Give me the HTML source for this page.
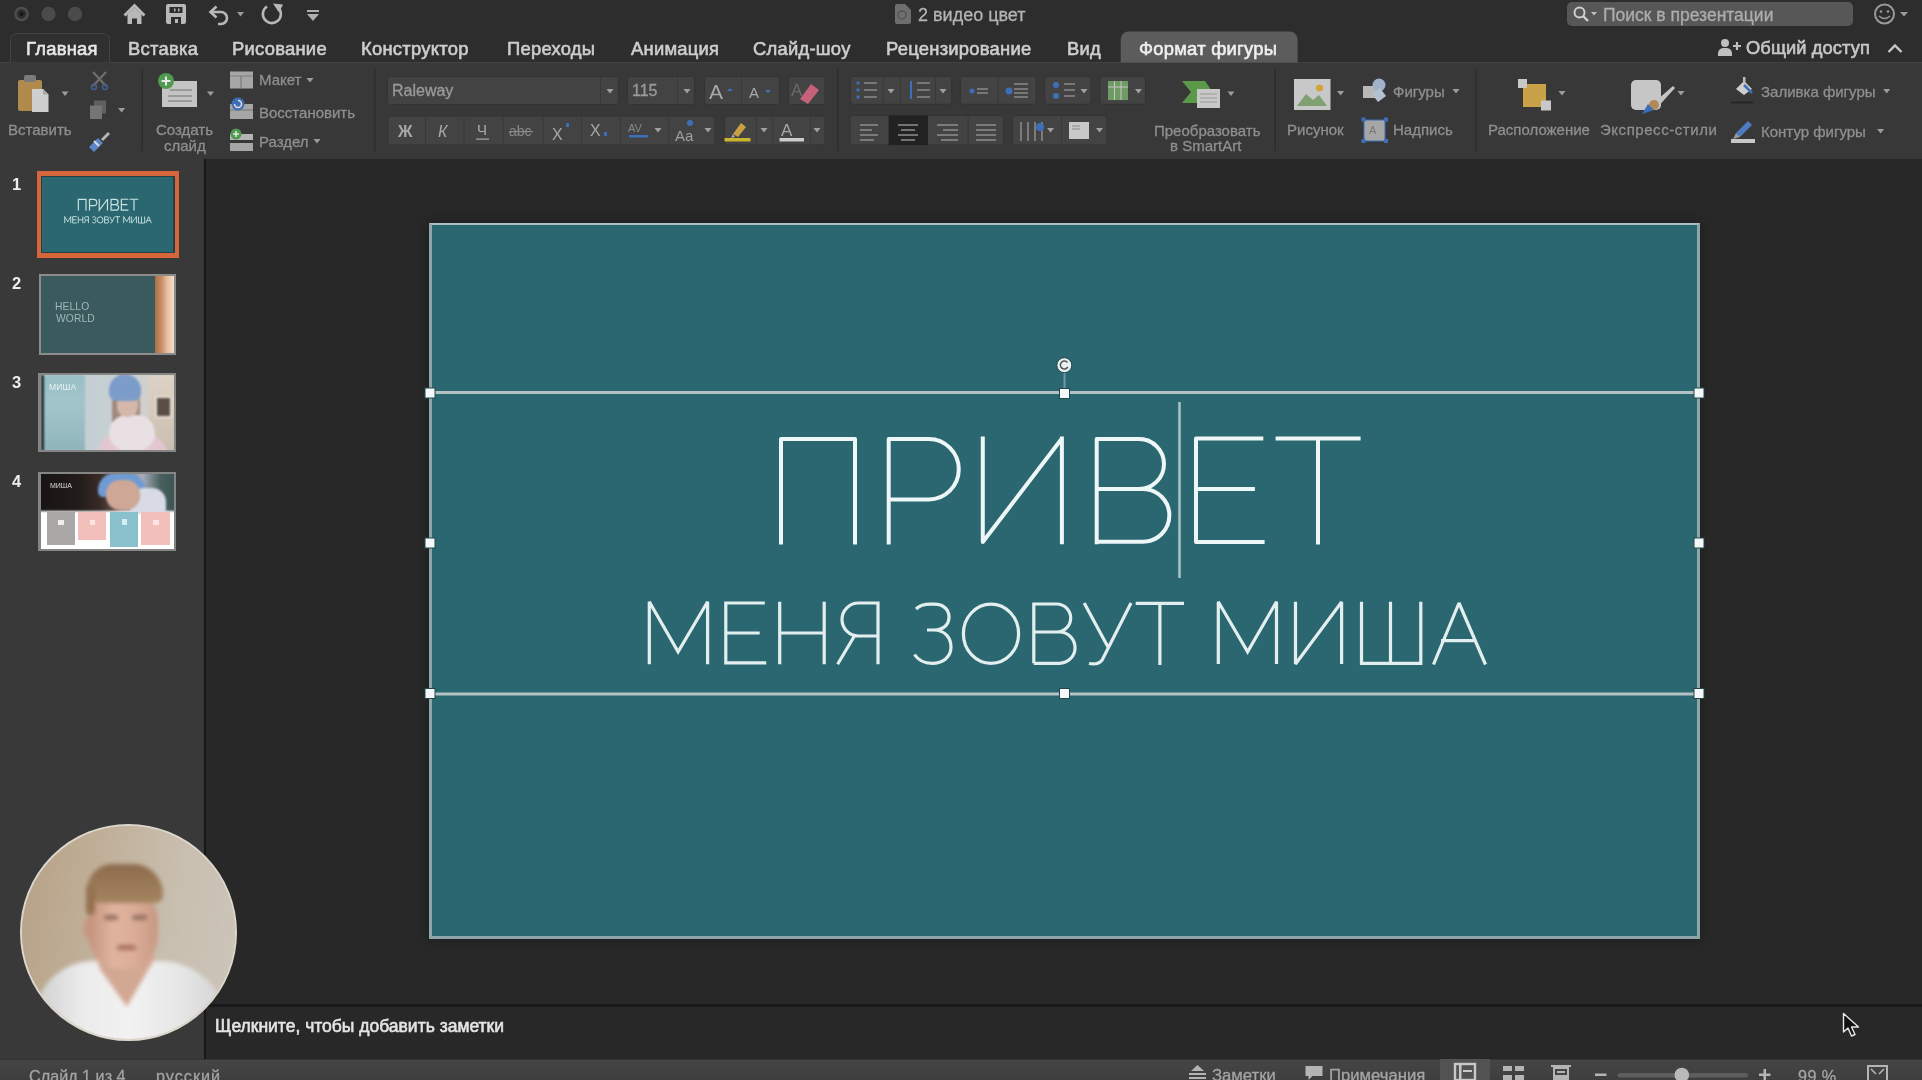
<!DOCTYPE html>
<html><head><meta charset="utf-8">
<style>
*{margin:0;padding:0;box-sizing:border-box}
html,body{width:1922px;height:1080px;overflow:hidden;background:#282828;font-family:"Liberation Sans",sans-serif}
.a{position:absolute}
.t{position:absolute;white-space:nowrap;line-height:1;will-change:transform}
svg{will-change:transform}
#titlebar{left:0;top:0;width:1922px;height:62px;background:#2d2d2d}
#ribbon{left:0;top:62px;width:1922px;height:97px;background:#383838;border-top:1px solid #424242}
#panel{left:0;top:159px;width:204px;height:901px;background:#393939}
#pdiv{left:204px;top:159px;width:2px;height:901px;background:#171717}
#main{left:206px;top:159px;width:1716px;height:845px;background:#282828}
#ndiv{left:206px;top:1004px;width:1716px;height:3px;background:#191919}
#notes{left:206px;top:1007px;width:1716px;height:52px;background:#282828}
#status{left:0;top:1059px;width:1922px;height:21px;background:linear-gradient(#454545,#3e3e3e);border-top:1px solid #333}
.tab{font-size:18.4px;font-weight:normal;color:#cdcdcd;top:39.8px;-webkit-text-stroke:0.6px currentColor;letter-spacing:0.25px}
.lbl{font-size:15px;color:#8f8f8f;-webkit-text-stroke:0.3px #8f8f8f}
.sep{width:2px;background:#2a2a2a;border-right:1px solid #3a3a3a}
.box{background:#3d3d3d;border-radius:3px}
#T1 path,#T2 path,#T2 ellipse{vector-effect:non-scaling-stroke}
</style></head><body>
<div class="a" id="titlebar"></div>
<div class="a" id="ribbon"></div>
<div class="a" id="panel"></div>
<div class="a" id="pdiv"></div>
<div class="a" id="main"></div>
<div class="a" id="ndiv"></div>
<div class="a" id="notes"></div>
<div class="a" id="status"></div>

<!-- TITLE BAR -->
<svg class="a" style="left:0;top:0" width="1922" height="63" viewBox="0 0 1922 63">
 <circle cx="21.5" cy="14" r="6" fill="none" stroke="#4e4e4e" stroke-width="2.5"/>
 <circle cx="21.5" cy="14" r="2" fill="#161616"/>
 <circle cx="48.5" cy="14" r="7.2" fill="#4b4b4b"/>
 <circle cx="75" cy="14" r="7.2" fill="#4b4b4b"/>
 <g fill="#b8b8b8" stroke="none">
  <path d="M123.5,14.5L134.5,3.5L145.5,14.5L143.5,16.5L134.5,7.5L125.5,16.5Z"/>
  <path d="M127.5,14L134.5,7.5L141.5,14V24H137V18.5H132V24H127.5Z"/>
  <path d="M166,6a2,2 0 0 1 2,-2H184a2,2 0 0 1 2,2V22a2,2 0 0 1 -2,2H168a2,2 0 0 1 -2,-2ZM169.5,7V13H182.5V7ZM171,17V24H181V17Z"/>
 </g>
 <rect x="174" y="8.5" width="1.5" height="3" fill="#b8b8b8"/><rect x="178" y="8.5" width="1.5" height="3" fill="#b8b8b8"/>
 <rect x="175" y="19" width="3" height="4" fill="#b8b8b8"/>
 <g fill="none" stroke="#b8b8b8" stroke-width="2.6">
  <path d="M211,12H221A6,6 0 0 1 221,24H218"/>
  <path d="M216.5,6.5L210.5,12L216.5,17.5"/>
  <path d="M278.5,8A9,9 0 1 1 267,6.5"/>
 </g>
 <path d="M273,3.5L283,4.5L279,12.5Z" fill="#b8b8b8"/>
 <path d="M237,12H244L240.5,16.5Z" fill="#9a9a9a"/>
 <rect x="307" y="10" width="12" height="2" fill="#b0b0b0"/>
 <path d="M307,14H319L313,21Z" fill="#b0b0b0"/>
 <path d="M895,6a2,2 0 0 1 2,-2H905L911,10V22a2,2 0 0 1 -2,2H897a2,2 0 0 1 -2,-2Z" fill="#6e6e6e"/>
 <circle cx="902" cy="15" r="4" fill="none" stroke="#555" stroke-width="1.5"/>
 <rect x="1567" y="2" width="286" height="24" rx="5" fill="#575757"/>
 <circle cx="1579.5" cy="12.5" r="5" fill="none" stroke="#d0d0d0" stroke-width="2"/>
 <path d="M1583,16L1588,21" stroke="#d0d0d0" stroke-width="2.4"/>
 <path d="M1591,12H1597L1594,15.5Z" fill="#c0c0c0"/>
 <circle cx="1884.5" cy="14" r="9.5" fill="none" stroke="#9a9a9a" stroke-width="2"/>
 <circle cx="1881" cy="11.5" r="1.3" fill="#9a9a9a"/><circle cx="1888" cy="11.5" r="1.3" fill="#9a9a9a"/>
 <path d="M1879,16Q1884.5,21 1890,16" fill="none" stroke="#9a9a9a" stroke-width="1.6"/>
 <path d="M1900,12H1908L1904,16.5Z" fill="#9a9a9a"/>
 <!-- tabs -->
 <path d="M10.5,62.5V39.5a6,6 0 0 1 6,-6H103.5a6,6 0 0 1 6,6V62.5" fill="#303030" stroke="#424242" stroke-width="1"/>
 <path d="M1120.7,62.5V39.5a8,8 0 0 1 8,-8H1289.6a8,8 0 0 1 8,8V62.5Z" fill="#5c5c5c"/>
 <!-- share -->
 <circle cx="1725" cy="43" r="4" fill="#c0c0c0"/>
 <path d="M1718,56V53a6,6 0 0 1 6,-5h2a6,6 0 0 1 6,5V56Z" fill="#c0c0c0"/>
 <path d="M1733,46H1741M1737,42V50" stroke="#c0c0c0" stroke-width="2.2"/>
 <path d="M1888.5,52L1895,45.5L1901.5,52" fill="none" stroke="#c8c8c8" stroke-width="2.4"/>
</svg>
<div class="t" style="left:918px;top:5.9px;font-size:18px;color:#b4b4b4;-webkit-text-stroke:0.3px currentColor">2 видео цвет</div>
<div class="t" style="left:1603px;top:7px;font-size:17.5px;color:#adadad;-webkit-text-stroke:0.3px currentColor">Поиск в презентации</div>
<div class="t" style="left:1746px;top:39.2px;font-size:18.3px;color:#c6c6c6;-webkit-text-stroke:0.6px currentColor;letter-spacing:0.1px">Общий доступ</div>
<div class="t tab" style="left:25.5px;color:#e8e8e8">Главная</div>
<div class="t tab" style="left:127.8px">Вставка</div>
<div class="t tab" style="left:231.8px">Рисование</div>
<div class="t tab" style="left:360.8px">Конструктор</div>
<div class="t tab" style="left:507px">Переходы</div>
<div class="t tab" style="left:631px">Анимация</div>
<div class="t tab" style="left:753px">Слайд-шоу</div>
<div class="t tab" style="left:885.8px">Рецензирование</div>
<div class="t tab" style="left:1066.8px">Вид</div>
<div class="t tab" style="left:1139px;color:#f0f0f0">Формат фигуры</div>

<!-- RIBBON -->
<svg class="a" style="left:0;top:61px" width="1922" height="98" viewBox="0 61 1922 98">
 <defs>
  <path id="car" d="M-3.5,-2H3.5L0,2.5Z"/>
 </defs>
 <!-- separators -->
 <g fill="#2c2c2c">
  <rect x="141.5" y="69" width="1.5" height="82"/>
  <rect x="374" y="69" width="1.5" height="82"/>
  <rect x="837" y="69" width="1.5" height="82"/>
  <rect x="1274.5" y="69" width="1.5" height="82"/>
  <rect x="1475.5" y="69" width="1.5" height="82"/>
 </g>
 <g fill="#9c9c9c">
  <use href="#car" x="65" y="93.6"/>
  <use href="#car" x="121.6" y="110"/>
  <use href="#car" x="210.5" y="93.6"/>
  <use href="#car" x="310" y="80"/>
  <use href="#car" x="317" y="141"/>
  <use href="#car" x="1231" y="93.5"/>
  <use href="#car" x="1340.6" y="93"/>
  <use href="#car" x="1456" y="91"/>
  <use href="#car" x="1562" y="93"/>
  <use href="#car" x="1681" y="93"/>
  <use href="#car" x="1886.7" y="91"/>
  <use href="#car" x="1880.6" y="131"/>
 </g>
 <!-- Paste -->
 <rect x="18" y="80" width="24" height="31" rx="2" fill="#b0894c"/>
 <rect x="24" y="75" width="12" height="7" rx="2" fill="#7a7a7a"/>
 <path d="M32,89H43L48.5,94.5V112H32Z" fill="#cfcfcf"/>
 <path d="M43,89V94.5H48.5" fill="#a8a8a8"/>
 <!-- Cut -->
 <path d="M93,72L106,86M106,72L93,86" stroke="#6e6e6e" stroke-width="2.2"/>
 <circle cx="94" cy="87" r="2.5" fill="none" stroke="#3f5f8f" stroke-width="1.6"/>
 <circle cx="105" cy="87" r="2.5" fill="none" stroke="#3f5f8f" stroke-width="1.6"/>
 <!-- Copy -->
 <rect x="94" y="100.5" width="12" height="13" fill="#606060"/>
 <rect x="90" y="105.5" width="12" height="13.5" fill="#757575"/>
 <!-- Brush -->
 <path d="M101,139L108,132L110,134L103,141Z" fill="#b8b8b8"/>
 <path d="M89,147L98,138L103,143L94,152Z" fill="#5b86c6"/>
 <path d="M94,141L99,146" stroke="#dcdcdc" stroke-width="2"/>
 <!-- New slide -->
 <rect x="162" y="81" width="35" height="26" fill="#c4c4c4"/>
 <path d="M170,90H192M168,96H192M168,101H192" stroke="#8d8d8d" stroke-width="1.6"/>
 <circle cx="166" cy="81" r="8" fill="#4f9a4f"/>
 <path d="M166,76.5V85.5M161.5,81H170.5" stroke="#e8e8e8" stroke-width="2"/>
 <!-- Layout -->
 <rect x="230" y="71.5" width="23" height="17" fill="#a6a6a6"/>
 <path d="M230,76H253M241,76V88.5" stroke="#7c7c7c" stroke-width="1.2"/>
 <!-- Reset -->
 <rect x="230" y="104" width="23" height="15" fill="#a6a6a6"/>
 <path d="M230,110H253" stroke="#7c7c7c" stroke-width="1.2"/>
 <circle cx="238" cy="104" r="6.5" fill="#3d6fb8"/>
 <path d="M234.5,104A3.5,3.5 0 1 0 238,100.5" fill="none" stroke="#e0e0e0" stroke-width="1.5"/>
 <!-- Section -->
 <rect x="230" y="134" width="23" height="6" fill="#b5b5b5"/>
 <rect x="230" y="143" width="23" height="8" fill="#a6a6a6"/>
 <circle cx="236" cy="134" r="5.5" fill="#4f9a4f"/>
 <path d="M236,131V137M233,134H239" stroke="#e8e8e8" stroke-width="1.5"/>
 <!-- Font boxes -->
 <g fill="#434343" stroke="#333" stroke-width="1">
  <rect x="387.5" y="76.5" width="231" height="28" rx="3"/>
  <rect x="627.5" y="76.5" width="67" height="28" rx="3"/>
  <rect x="704.5" y="76.5" width="75" height="28" rx="3"/>
  <rect x="788.5" y="76.5" width="36.5" height="28" rx="3"/>
  <rect x="388" y="116" width="327" height="29" rx="3"/>
  <rect x="724.5" y="116" width="100.5" height="29" rx="3"/>
  <rect x="850.3" y="76.3" width="101.3" height="28" rx="3"/>
  <rect x="960.4" y="76.3" width="75.9" height="28" rx="3"/>
  <rect x="1044.7" y="76.3" width="46.3" height="28" rx="3"/>
  <rect x="1100" y="76.3" width="45.5" height="28" rx="3"/>
  <rect x="850" y="115.5" width="153.5" height="29.5" rx="3"/>
  <rect x="1012.4" y="115.5" width="94.6" height="29.5" rx="3"/>
 </g>
 <rect x="888.6" y="115.5" width="39.4" height="29.5" fill="#222"/>
 <g fill="#383838">
  <rect x="600" y="77" width="1" height="27"/>
  <rect x="677" y="77" width="1" height="27"/>
  <rect x="741" y="77" width="1" height="27"/>
  <rect x="425" y="116.5" width="1" height="28"/>
  <rect x="463.5" y="116.5" width="1" height="28"/>
  <rect x="502.5" y="116.5" width="1" height="28"/>
  <rect x="542.5" y="116.5" width="1" height="28"/>
  <rect x="581" y="116.5" width="1" height="28"/>
  <rect x="620" y="116.5" width="1" height="28"/>
  <rect x="668.5" y="116.5" width="1" height="28"/>
  <rect x="756" y="116.5" width="1" height="28"/>
  <rect x="772.5" y="116.5" width="1" height="28"/>
  <rect x="810" y="116.5" width="1" height="28"/>
  <rect x="882.7" y="77" width="1" height="27"/>
  <rect x="900" y="77" width="1" height="27"/>
  <rect x="935" y="77" width="1" height="27"/>
  <rect x="997.5" y="77" width="1" height="27"/>
  <rect x="967.6" y="116" width="1" height="28.5"/>
  <rect x="1061" y="116" width="1" height="28.5"/>
 </g>
 <g fill="#a0a0a0">
  <use href="#car" x="610" y="91"/>
  <use href="#car" x="687" y="91"/>
  <use href="#car" x="658" y="130"/>
  <use href="#car" x="708" y="130"/>
  <use href="#car" x="764" y="130"/>
  <use href="#car" x="817" y="130"/>
  <use href="#car" x="891" y="91"/>
  <use href="#car" x="943" y="91"/>
  <use href="#car" x="1084" y="91"/>
  <use href="#car" x="1138.5" y="91"/>
  <use href="#car" x="1050.5" y="130"/>
  <use href="#car" x="1099.5" y="130"/>
 </g>
 <!-- grow/shrink -->
 <text x="709" y="98.5" font-family="Liberation Sans" font-size="21" fill="#a8a8a8">A</text>
 <path d="M727,91L730,88L733,91Z" fill="#3d6fb8"/>
 <text x="749" y="98" font-family="Liberation Sans" font-size="15" fill="#a8a8a8">A</text>
 <path d="M765,90L768,93L771,90Z" fill="#3d6fb8"/>
 <!-- clear format -->
 <text x="791" y="96" font-family="Liberation Sans" font-size="17" fill="#6a6a6a">A</text>
 <path d="M800,99L811,84L819,90L808,104Z" fill="#c5627a"/>
 <!-- B I U etc -->
 <text x="398" y="137" font-family="Liberation Sans" font-size="16" font-weight="bold" fill="#a8a8a8">Ж</text>
 <text x="438" y="137" font-family="Liberation Sans" font-size="16" font-style="italic" fill="#a8a8a8">К</text>
 <text x="477" y="135" font-family="Liberation Sans" font-size="15" fill="#a8a8a8">Ч</text>
 <rect x="476" y="138.5" width="13" height="1.2" fill="#a8a8a8"/>
 <text x="509" y="136" font-family="Liberation Sans" font-size="14" fill="#8a8a8a">abc</text>
 <rect x="509" y="131" width="24" height="1.2" fill="#8a8a8a"/>
 <text x="552" y="140" font-family="Liberation Sans" font-size="16" fill="#a8a8a8">X</text>
 <rect x="566" y="123" width="3" height="4" fill="#3d6fb8"/>
 <text x="590" y="136" font-family="Liberation Sans" font-size="16" fill="#a8a8a8">X</text>
 <rect x="604" y="132" width="3" height="4" fill="#3d6fb8"/>
 <text x="628" y="132" font-family="Liberation Sans" font-size="11" fill="#8a8a8a">AV</text>
 <rect x="629" y="135" width="19" height="2.5" fill="#3d6fb8"/>
 <text x="675" y="141" font-family="Liberation Sans" font-size="15" fill="#a0a0a0">Aa</text>
 <circle cx="690" cy="123" r="3" fill="#3d6fb8"/>
 <!-- highlighter -->
 <path d="M733,134L741,123L746,127L738,137Z" fill="#c9a043"/>
 <path d="M733,134L731,138L735,137Z" fill="#aaa"/>
 <rect x="724.5" y="138" width="26" height="3.5" fill="#cbb52c"/>
 <text x="781" y="136" font-family="Liberation Sans" font-size="17" fill="#a8a8a8">A</text>
 <rect x="779.5" y="138" width="24.5" height="3.5" fill="#cccccc"/>
 <!-- bullets -->
 <g fill="#3d6fb8">
  <circle cx="858" cy="83" r="1.7"/><circle cx="858" cy="90" r="1.7"/><circle cx="858" cy="97" r="1.7"/>
  <rect x="910" y="81" width="2" height="18"/>
 </g>
 <g stroke="#8a8a8a" stroke-width="1.5">
  <path d="M864,83H877M864,90H877M864,97H877"/>
  <path d="M917,83H930M917,90H930M917,97H930"/>
  <path d="M977,89H988M977,93H988M1014,84H1028M1014,89H1028M1014,93H1028M1014,97H1028"/>
  <path d="M1064,84H1075M1064,90H1075M1064,96H1075"/>
 </g>
 <circle cx="972" cy="91" r="2.5" fill="#3d6fb8"/>
 <circle cx="1009" cy="91" r="3.5" fill="#3d6fb8"/>
 <circle cx="1056" cy="85" r="3" fill="#3d6fb8"/><circle cx="1056" cy="96" r="3" fill="#3d6fb8"/>
 <rect x="1108" y="81" width="20" height="19" fill="#6e9a63"/>
 <path d="M1114.5,81V100M1121,81V100M1108,87H1128" stroke="#c7c7c7" stroke-width="1"/>
 <!-- align -->
 <g stroke="#8e8e8e" stroke-width="1.5">
  <path d="M860,125H878M860,130H872M860,135H878M860,140H874"/>
  <path d="M898,125H918M901,130H915M898,135H918M901,140H915"/>
  <path d="M937,125H958M943,130H958M937,135H958M941,140H958"/>
  <path d="M976,125H996M976,130H996M976,135H996M976,140H996"/>
  <path d="M1021,122V141M1028,122V141M1035,122V141M1042,122V141"/>
 </g>
 <circle cx="1040" cy="127" r="4" fill="#3d6fb8"/>
 <rect x="1069" y="122" width="20" height="17" fill="#c8c8c8"/>
 <path d="M1072,126H1080M1072,129H1080" stroke="#888" stroke-width="1.2"/>
 <!-- SmartArt -->
 <path d="M1182,81H1205L1214,94L1205,103H1182L1191,92Z" fill="#5a9a4a"/>
 <rect x="1197" y="89" width="23" height="19" fill="#c8c8c8"/>
 <path d="M1200,94H1217M1200,98H1217M1200,102H1217" stroke="#999" stroke-width="1"/>
 <!-- picture -->
 <rect x="1294" y="79" width="36.5" height="31" fill="#c8c8c8"/>
 <path d="M1297,106L1306,94L1313,100L1319,95L1327,106Z" fill="#7fa070"/>
 <circle cx="1319.5" cy="88" r="3.5" fill="#d3a43a"/>
 <!-- shapes -->
 <rect x="1363" y="86" width="13" height="12" fill="#b8b8b8"/>
 <circle cx="1379" cy="85" r="6.5" fill="#9fb2c9"/>
 <path d="M1372,94L1380,88L1386,96L1378,102Z" fill="#b4c1d1"/>
 <!-- textbox -->
 <rect x="1364" y="120" width="21" height="21" fill="#a6a6a6" stroke="#3d6fb8" stroke-width="1"/>
 <g fill="#3d6fb8"><rect x="1361.5" y="117.5" width="4" height="4"/><rect x="1384" y="117.5" width="4" height="4"/><rect x="1361.5" y="139" width="4" height="4"/><rect x="1384" y="139" width="4" height="4"/></g>
 <text x="1369" y="134" font-family="Liberation Sans" font-size="11" fill="#777">A</text>
 <!-- arrange -->
 <rect x="1523" y="84" width="23" height="23" fill="#c9a148"/>
 <rect x="1518" y="79" width="9" height="9" fill="#c8c8c8"/>
 <rect x="1541" y="100.5" width="10" height="10" fill="#c8c8c8"/>
 <!-- quick styles -->
 <rect x="1631" y="80" width="30" height="30" rx="5" fill="#c6c6c6"/>
 <path d="M1650,106L1673,86L1675,88L1655,110Z" fill="#c4c4c4"/>
 <circle cx="1654" cy="105" r="5" fill="#b38a55"/>
 <path d="M1642,114L1648,104L1654,110Z" fill="#3d6fb8"/>
 <!-- fill -->
 <path d="M1736,89L1744,81L1752,89L1744,95Z" fill="#cfcfcf"/>
 <path d="M1744,85L1752,93" stroke="#3d6fb8" stroke-width="2.5"/>
 <rect x="1743" y="77" width="2.5" height="6" fill="#bbb"/>
 <rect x="1731" y="101.5" width="22.5" height="2" fill="#262626"/>
 <!-- outline -->
 <path d="M1736,133L1748,121L1752,125L1740,137Z" fill="#4d7cc0"/>
 <path d="M1736,133L1733,139L1740,137Z" fill="#9a9a9a"/>
 <rect x="1731" y="139" width="24" height="4" fill="#c8c8c8"/>
</svg>
<div class="t lbl" style="left:8px;top:122.3px">Вставить</div>
<div class="t lbl" style="left:156px;top:122.3px">Создать</div>
<div class="t lbl" style="left:163.5px;top:137.5px">слайд</div>
<div class="t lbl" style="left:258.5px;top:72px">Макет</div>
<div class="t lbl" style="left:258.5px;top:104.6px">Восстановить</div>
<div class="t lbl" style="left:258.5px;top:134.3px">Раздел</div>
<div class="t" style="left:391.5px;top:82.7px;font-size:16px;color:#9a9a9a;-webkit-text-stroke:0.3px currentColor">Raleway</div>
<div class="t" style="left:631.5px;top:82.7px;font-size:16px;color:#9a9a9a;-webkit-text-stroke:0.3px currentColor">115</div>
<div class="t lbl" style="left:1153.5px;top:123.3px">Преобразовать</div>
<div class="t lbl" style="left:1170px;top:137.8px">в SmartArt</div>
<div class="t lbl" style="left:1287px;top:121.8px">Рисунок</div>
<div class="t lbl" style="left:1393px;top:83.7px">Фигуры</div>
<div class="t lbl" style="left:1393px;top:121.8px">Надпись</div>
<div class="t lbl" style="left:1488px;top:121.8px">Расположение</div>
<div class="t lbl" style="left:1600px;top:121.8px;letter-spacing:0.55px">Экспресс-стили</div>
<div class="t lbl" style="left:1761px;top:83.7px">Заливка фигуры</div>
<div class="t lbl" style="left:1761px;top:123.7px">Контур фигуры</div>
<!-- /RIBBON -->
<!-- SLIDE -->
<div class="a" style="left:429px;top:223px;width:1271px;height:716px;background:#2b6770;border:3px solid #8ea6aa;border-top:2px solid #a9bfc3;box-shadow:0 0 10px 2px rgba(0,0,0,0.22)"></div>
<svg class="a" style="left:0;top:0" width="1922" height="1080" viewBox="0 0 1922 1080">
 <g fill="none" stroke="#eef7f7" stroke-width="4.0" stroke-linejoin="round"><g id="T1">
  <path d="M781,544.5V439H855V544.5"/>
  <path d="M888.7,544.5V439H928.6A30.2,30.2 0 0 1 928.6,499.4H888.7"/>
  <path d="M982.8,436.5V542L1061.9,438.5M1061.9,436.5V544.3"/>
  <path d="M1096.7,544.3V439H1139A25,25 0 0 1 1139,489H1096.7M1139,489H1143A26.35,26.35 0 0 1 1143,541.7H1096.7"/>
  <path d="M1263.3,438.5H1196V542H1264.6M1196,489H1254.9"/>
  <path d="M1275.6,438.5H1360.6M1318,438.5V544.4"/>
 </g>
 </g>
 <line x1="1179.5" y1="402" x2="1179.5" y2="578" stroke="#a9c4c7" stroke-width="2.5"/>
 <g fill="none" stroke="#e3efef" stroke-width="3.2" stroke-linejoin="miter" stroke-miterlimit="2"><g id="T2">
  <path d="M649.3,664.3V601.7L678.1,651.9L707.6,601.7V664.3"/>
  <path d="M764.8,603H725.8V662.9H766.2M725.8,633H759.7"/>
  <path d="M779.7,601.7V664.3M824.2,601.7V664.3M779.7,633H824.2"/>
  <path d="M878,664.3V603H858.5A16.5,16.5 0 0 0 858.5,636H878M854.4,636L837.6,664.3"/>
  <path d="M916,609C922,603 930,604.2 934,604.2C944,604.2 949,610 949,617C949,625 943,630 934,630H927M934,630C945,630 951,638 951,647C951,657 943,663.3 932,663.3C924,663.3 918,660 914.5,654.5"/>
  <ellipse cx="991" cy="633.7" rx="27.6" ry="29.6"/>
  <path d="M1033.8,663.3V604H1056.7A14,14 0 0 1 1056.7,632H1033.8M1056.7,632H1059.4A15.65,15.65 0 0 1 1059.4,663.3H1033.8"/>
  <path d="M1084.2,603L1108.4,647.7M1131,603L1102.2,660C1099,664 1094,664.5 1089,663.5"/>
  <path d="M1135.7,603.3H1184M1159.9,603.3V665"/>
  <path d="M1218.3,664.1V601.7L1247.6,651.7L1276.5,601.7V664.1"/>
  <path d="M1295.5,601.7V664L1341.6,602V664.1"/>
  <path d="M1361.5,601.7V663.4H1420.8V601.7M1390.5,601.7V663.4"/>
  <path d="M1433.5,664.5L1459,603L1485.5,664.5M1441,640.7H1476"/>
 </g>
 </g>
 <!-- selection -->
 <g stroke="#b4c2c4" stroke-width="3" fill="none">
  <line x1="430" y1="392.5" x2="1699" y2="392.5"/>
  <line x1="430" y1="694" x2="1699" y2="694"/>
 </g>
 <line x1="1064.5" y1="373" x2="1064.5" y2="389" stroke="#6f9a9f" stroke-width="2"/>
 <g fill="#f4f8f8" stroke="#24464b" stroke-width="1">
  <rect x="425" y="388" width="10" height="10"/>
  <rect x="1059.5" y="388.5" width="10" height="10"/>
  <rect x="1694" y="388" width="10" height="10"/>
  <rect x="425" y="538" width="10" height="10"/>
  <rect x="1694" y="538" width="10" height="10"/>
  <rect x="425" y="688.5" width="10" height="10"/>
  <rect x="1059.5" y="688.5" width="10" height="10"/>
  <rect x="1694" y="688.5" width="10" height="10"/>
 </g>
 <circle cx="1064.3" cy="365.2" r="7.5" fill="#e8f1f1" stroke="#24464b" stroke-width="1"/>
 <path d="M1067.5,362.5A4,4 0 1 0 1067.8,367" fill="none" stroke="#555" stroke-width="1.5"/>
</svg>
<!-- PANEL -->
<div class="t" style="left:11.5px;top:175.5px;font-size:16.5px;font-weight:bold;color:#eeeeee">1</div>
<div class="t" style="left:11.5px;top:274.6px;font-size:16.5px;font-weight:bold;color:#eeeeee">2</div>
<div class="t" style="left:11.5px;top:374px;font-size:16.5px;font-weight:bold;color:#eeeeee">3</div>
<div class="t" style="left:11.5px;top:473.4px;font-size:16.5px;font-weight:bold;color:#eeeeee">4</div>
<!-- thumb 1 -->
<div class="a" style="left:36.6px;top:171.2px;width:142.5px;height:86.4px;background:#d5653a"></div>
<div class="a" style="left:41px;top:175.6px;width:133.6px;height:77.6px;background:#263f42"></div>
<div class="a" style="left:42.2px;top:176.8px;width:131.2px;height:75.2px;background:#2b6770"></div>
<svg class="a" style="left:0;top:0" width="204" height="260" viewBox="0 0 204 260">
 <g fill="none" stroke="#c9e2e2" transform="translate(42.2,176.8) scale(0.1036,0.1057) translate(-432,-226)">
  <use href="#T1" stroke-width="1.2"/>
  <use href="#T2" stroke-width="0.9"/>
 </g>
</svg>
<!-- thumb 2 -->
<div class="a" style="left:38.7px;top:273.7px;width:137px;height:81.3px;background:#3b5a5e;border:2px solid #8c8c8c"></div>
<div class="a" style="left:155px;top:275.7px;width:18.7px;height:77.3px;background:linear-gradient(90deg,#a86f48 0%,#c98f66 35%,#e8bfa0 65%,#f5dccb 100%)"></div>
<div class="t" style="left:55px;top:302.3px;font-size:10.3px;color:#9fb8ba;letter-spacing:0.1px">HELLO</div>
<div class="t" style="left:55.5px;top:314.3px;font-size:10.3px;color:#9fb8ba;letter-spacing:0.1px">WORLD</div>
<!-- thumb 3 -->
<div class="a" style="left:38.4px;top:372.8px;width:137.8px;height:79.6px;background:#858585"></div>
<div class="a" style="left:40.6px;top:375px;width:133.4px;height:75.2px;overflow:hidden;background:#c3cfd2">
 <div class="a" style="left:-4px;top:-4px;width:142px;height:84px;filter:blur(1.3px);background:linear-gradient(90deg,#c2cdd1 0%,#c7d1d4 60%,#d3d0ca 80%,#d6cfc5 100%)">
  <div class="a" style="left:4px;top:4px;width:44px;height:76px;background:linear-gradient(180deg,#98c0c6,#a2c5ca 40%,#8fb5bb 100%)"></div>
  <div class="a" style="left:4px;top:4px;width:3px;height:76px;background:#1e2a2c"></div>
  <div class="a" style="left:112px;top:4px;width:30px;height:80px;background:linear-gradient(180deg,#ddd3c6,#d4c8b9 50%,#c9bdb0)"></div>
  <div class="a" style="left:118px;top:25px;width:17px;height:22px;background:#5b4e46;border:2px solid #e6ded3"></div>
  <div class="a" style="left:60px;top:60px;width:72px;height:30px;border-radius:26px 30px 0 0;background:#e3c6d0"></div>
  <div class="a" style="left:75px;top:20px;width:28px;height:40px;border-radius:10px;background:#a08a7e"></div>
  <div class="a" style="left:72px;top:44px;width:46px;height:36px;border-radius:20px;background:#e9e0e3"></div>
  <div class="a" style="left:80px;top:18px;width:21px;height:28px;border-radius:10px;background:#d5b8ab"></div>
  <div class="a" style="left:72px;top:3px;width:32px;height:27px;border-radius:16px 16px 8px 8px;background:#7c9cca"></div>
 </div>
 <div class="t" style="left:8px;top:8px;font-size:8.5px;color:#e6f3f4;letter-spacing:0.2px">МИША</div>
</div>
<!-- thumb 4 -->
<div class="a" style="left:38px;top:471.7px;width:138.2px;height:79.4px;background:#858585"></div>
<div class="a" style="left:40.5px;top:474.2px;width:133.2px;height:74.5px;overflow:hidden;background:#ffffff">
 <div class="a" style="left:-3px;top:-3px;width:139px;height:40px;filter:blur(1.2px);background:linear-gradient(90deg,#171413 0%,#221c1a 30%,#3a2b27 45%,#6d5a55 58%,#a9aebd 75%,#48605f 88%,#3a5252 100%)">
  <div class="a" style="left:60px;top:2px;width:48px;height:24px;border-radius:20px 22px 6px 6px;background:#6f9bd4"></div>
  <div class="a" style="left:92px;top:17px;width:36px;height:26px;border-radius:14px 14px 0 0;background:#d8dae6"></div>
  <div class="a" style="left:68px;top:9px;width:34px;height:30px;border-radius:14px;background:#cfa797"></div>
 </div>
 <div class="t" style="left:9px;top:8px;font-size:7px;color:#dddddd">МИША</div>
 <div class="a" style="left:6px;top:37.8px;width:28px;height:32.6px;background:#aaa7a7"></div>
 <div class="a" style="left:37.9px;top:37.8px;width:27.6px;height:27.7px;background:#f3bfba"></div>
 <div class="a" style="left:69.7px;top:37.8px;width:27.7px;height:34.6px;background:#88c0cc"></div>
 <div class="a" style="left:100.6px;top:37.8px;width:28.6px;height:32.6px;background:#f3bfba"></div>
 <div class="a" style="left:17px;top:46px;width:6px;height:5px;background:#eee"></div>
 <div class="a" style="left:49px;top:46px;width:5px;height:5px;background:#fbe6e4"></div>
 <div class="a" style="left:81px;top:45px;width:5px;height:6px;background:#d6ecf0"></div>
 <div class="a" style="left:112px;top:46px;width:6px;height:5px;background:#fbe6e4"></div>
</div>
<!-- webcam -->
<div class="a" style="left:19.8px;top:823.7px;width:217.6px;height:217.6px;border-radius:50%;overflow:hidden;background:#c6b8a4;border:2px solid #dcd6cc">
 <div class="a" style="left:-18px;top:-17px;width:250px;height:250px;filter:blur(2.2px);background:linear-gradient(100deg,#b39c80 0%,#c0af98 35%,#c9bfb0 65%,#cdc7bd 100%)">
  <div class="a" style="left:30px;top:152px;width:195px;height:100px;border-radius:60px 70px 0 0;background:linear-gradient(90deg,#cfcfcf,#ebebeb 25%,#f2f2f2 50%,#e6e6e6 75%,#d2d2d2)"></div>
  <div class="a" style="left:90px;top:140px;width:60px;height:58px;background:#d3a893;clip-path:polygon(0 0,100% 0,100% 20%,55% 100%,10% 35%)"></div>
  <div class="a" style="left:84px;top:86px;width:70px;height:74px;border-radius:24px 24px 34px 34px;background:linear-gradient(90deg,#c3927b,#dfb39e 35%,#dcae98 65%,#c79782)"></div>
  <div class="a" style="left:80px;top:110px;width:10px;height:19px;border-radius:5px;background:#c8957e"></div>
  <div class="a" style="left:83px;top:55px;width:76px;height:39px;border-radius:34px 40px 10px 18px;background:linear-gradient(180deg,#8d6c4e,#a5845f)"></div>
  <div class="a" style="left:82px;top:76px;width:9px;height:30px;border-radius:5px;background:#95714f"></div>
  <div class="a" style="left:100px;top:106px;width:14px;height:5px;border-radius:3px;background:#93705f"></div>
  <div class="a" style="left:128px;top:106px;width:15px;height:5px;border-radius:3px;background:#93705f"></div>
  <div class="a" style="left:113px;top:136px;width:19px;height:5px;border-radius:3px;background:#a86f62"></div>
 </div>
</div>
<!-- notes -->
<div class="t" style="left:214.5px;top:1018px;font-size:17.5px;color:#e4e4e4;-webkit-text-stroke:0.6px currentColor">Щелкните, чтобы добавить заметки</div>
<!-- status -->
<div class="t" style="left:29px;top:1067.5px;font-size:16.2px;color:#a4a4a4;-webkit-text-stroke:0.3px currentColor">Слайд 1 из 4</div>
<div class="t" style="left:155.5px;top:1067.5px;font-size:16.2px;color:#a4a4a4;letter-spacing:1px;-webkit-text-stroke:0.3px currentColor">русский</div>
<div class="t" style="left:1212px;top:1067.5px;font-size:16.7px;color:#a4a4a4;-webkit-text-stroke:0.3px currentColor">Заметки</div>
<div class="t" style="left:1328.5px;top:1067.5px;font-size:16.7px;color:#a4a4a4;-webkit-text-stroke:0.3px currentColor">Примечания</div>
<div class="t" style="left:1797.5px;top:1067.5px;font-size:16.2px;color:#a4a4a4;letter-spacing:0.4px;-webkit-text-stroke:0.3px currentColor">99 %</div>
<svg class="a" style="left:0;top:1000px" width="1922" height="80" viewBox="0 1000 1922 80">
 <rect x="1440" y="1059" width="50" height="21" fill="#525252"/>
 <g fill="#b4b4b4">
  <path d="M1191,1071L1197.5,1065L1204,1071Z"/>
  <rect x="1189" y="1073" width="17" height="2"/><rect x="1189" y="1077" width="17" height="2"/>
  <path d="M1305.5,1066h17v10h-10l-4,4v-4h-3z"/>
  <rect x="1455" y="1064" width="20" height="16" fill="none" stroke="#c8c8c8" stroke-width="2.4"/>
  <rect x="1459" y="1065" width="2.5" height="15" fill="#c8c8c8"/>
  <rect x="1463" y="1070" width="9" height="2" fill="#c8c8c8"/>
  <rect x="1503" y="1066" width="9" height="5"/><rect x="1515" y="1066" width="9" height="5"/>
  <rect x="1503" y="1075" width="9" height="5"/><rect x="1515" y="1075" width="9" height="5"/>
  <path d="M1551,1065h20v2h-2v13h-16v-13h-2z"/>
  <rect x="1595" y="1073.5" width="11.5" height="2.5"/>
  <rect x="1759" y="1073.5" width="11.5" height="2.5"/>
  <rect x="1763.5" y="1069" width="2.5" height="11.5"/>
 </g>
 <rect x="1555" y="1069" width="12" height="6" fill="#444"/>
 <rect x="1557" y="1071" width="8" height="2" fill="#b4b4b4"/>
 <rect x="1617.5" y="1073" width="130.5" height="4.5" rx="2.2" fill="#5e5e5e"/>
 <circle cx="1681.8" cy="1075" r="7.3" fill="#b9b9b9"/>
 <rect x="1868" y="1066" width="19" height="16" fill="none" stroke="#b4b4b4" stroke-width="2"/>
 <path d="M1871,1069L1876,1074M1884,1069L1879,1074" stroke="#b4b4b4" stroke-width="1.6"/>
 <!-- cursor -->
 <path d="M1843.5,1013.5V1032L1848,1028L1851.5,1036L1855,1034.5L1851.5,1027H1858.5Z" fill="#111" stroke="#e8e8e8" stroke-width="1.4" stroke-linejoin="round"/>
</svg>

</body></html>
